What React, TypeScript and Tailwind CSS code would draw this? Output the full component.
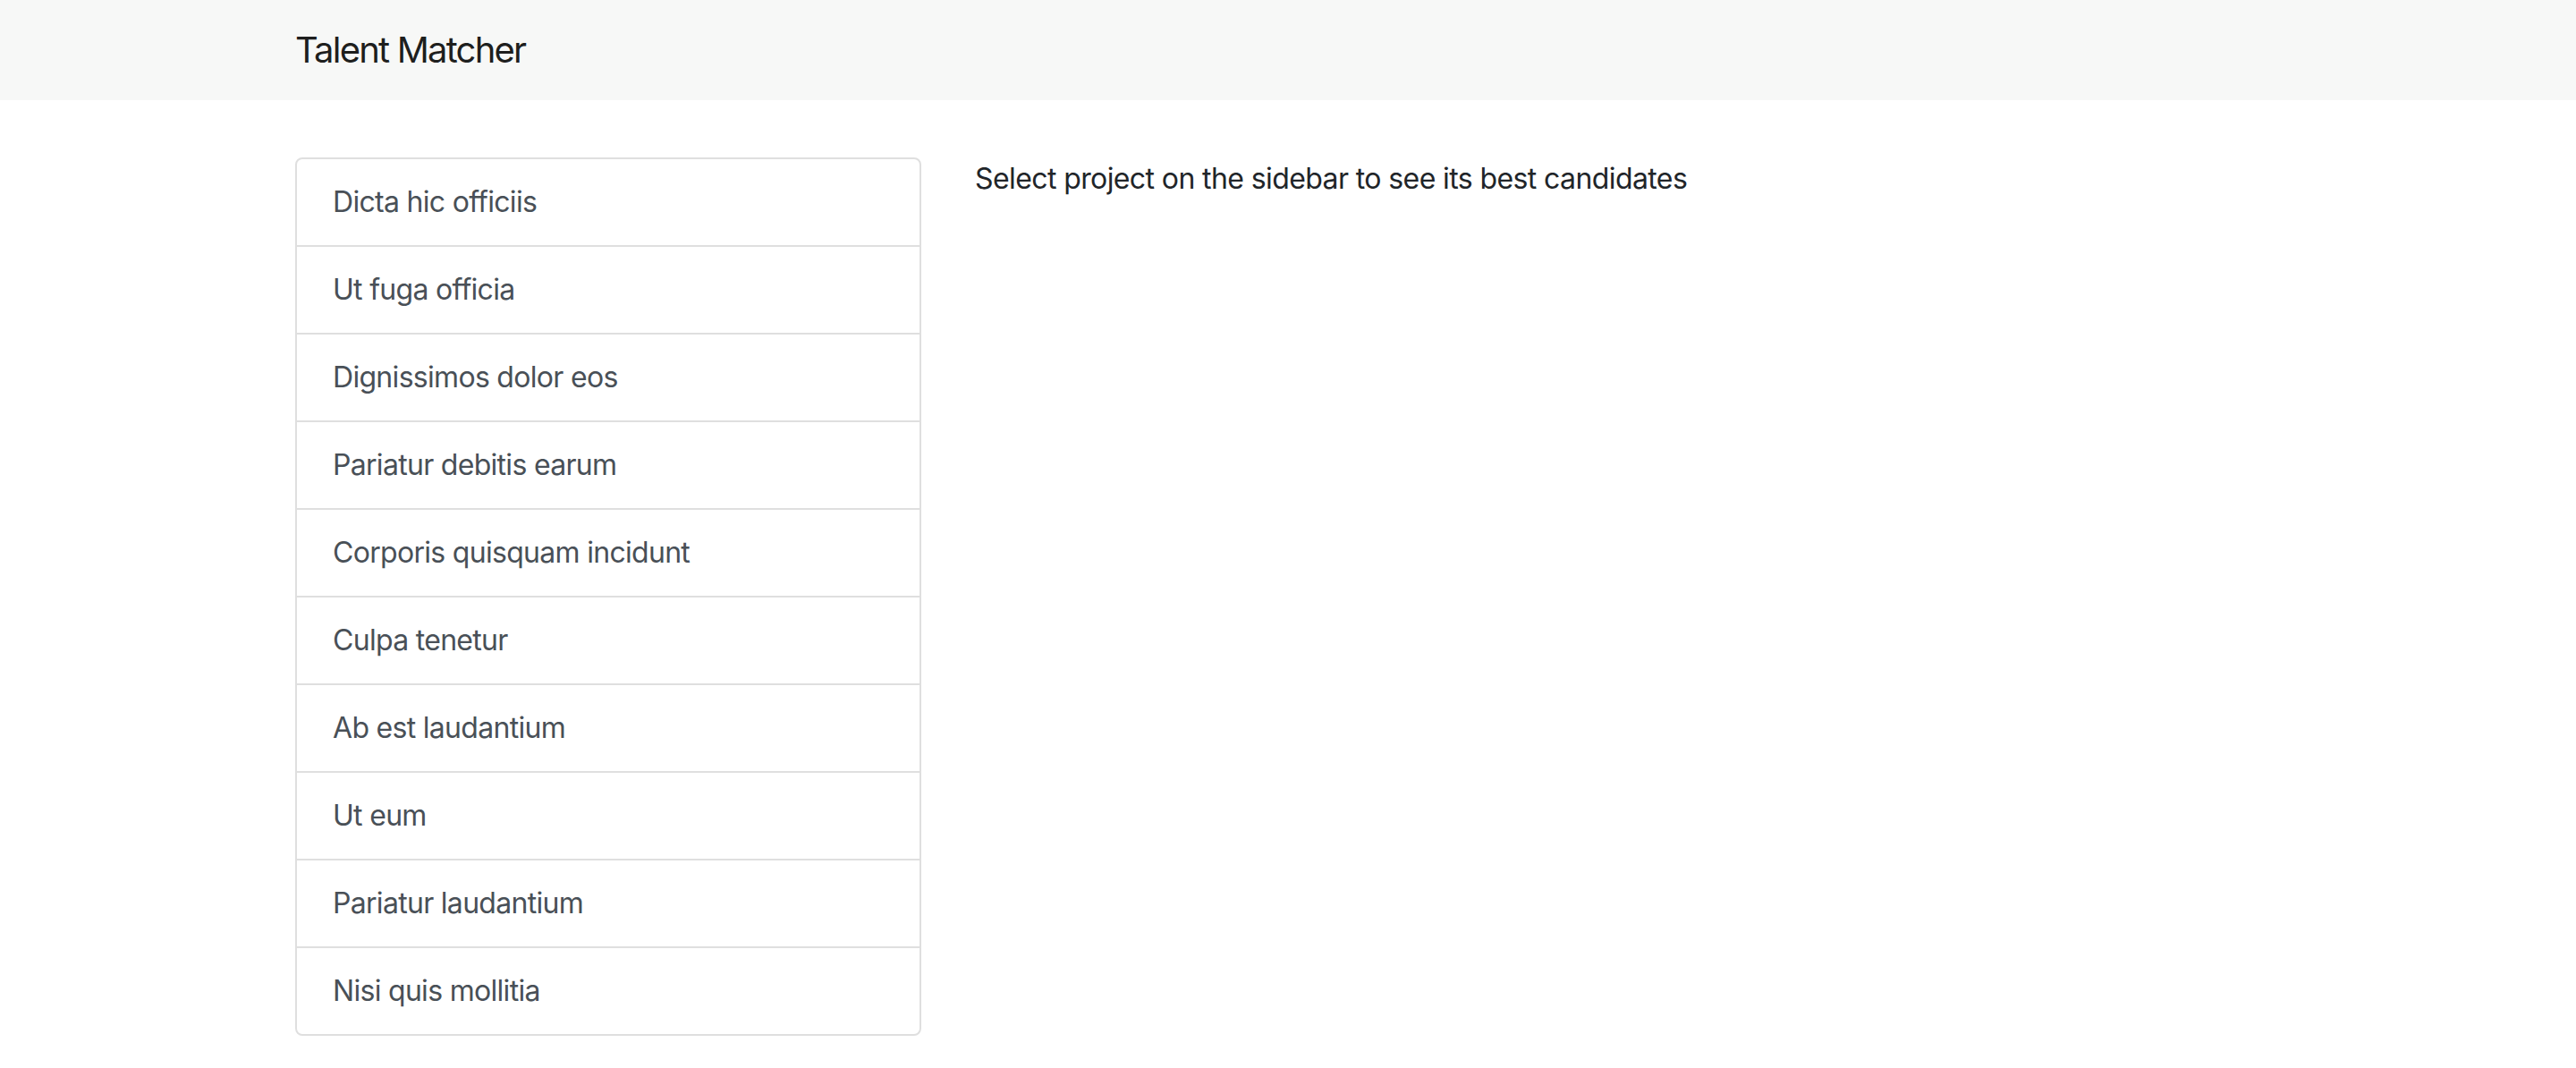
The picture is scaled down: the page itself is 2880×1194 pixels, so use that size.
const projects = [
  'Dicta hic officiis',
  'Ut fuga officia',
  'Dignissimos dolor eos',
  'Pariatur debitis earum',
  'Corporis quisquam incidunt',
  'Culpa tenetur',
  'Ab est laudantium',
  'Ut eum',
  'Pariatur laudantium',
  'Nisi quis mollitia',
]

export default function App() {
  return (
    <div className="min-h-screen bg-white font-['Inter','Liberation_Sans',sans-serif] text-[#212529]">
      <nav className="bg-[#f7f8f7] py-[16px]">
        <div className="mx-auto w-[2280px] px-[30px]">
          <a href="#" className="inline-block py-[10px] text-[40px] leading-[60px] text-black/90 tracking-[-1.8px]">
            Talent Matcher
          </a>
        </div>
      </nav>

      <div className="mx-auto mt-[64px] w-[2280px] px-[30px]">
        <div className="-mx-[30px] flex">
          {/* sidebar */}
          <div className="w-1/3 px-[30px]">
            <div className="flex flex-col divide-y-2 divide-[#dfdfdf] overflow-hidden rounded-[8px] border-2 border-[#dfdfdf]">
              {projects.map((name) => (
                <a
                  key={name}
                  href="#"
                  className="block px-[40px] py-[24px] text-[32px] leading-[48px] text-[#495057] tracking-[-0.7px] hover:bg-[#f8f9fa]"
                >
                  {name}
                </a>
              ))}
            </div>
          </div>

          {/* main */}
          <div className="w-2/3 px-[30px]">
            <p className="text-[32px] leading-[48px] tracking-[-0.6px]">
              Select project on the sidebar to see its best candidates
            </p>
          </div>
        </div>
      </div>
    </div>
  )
}
